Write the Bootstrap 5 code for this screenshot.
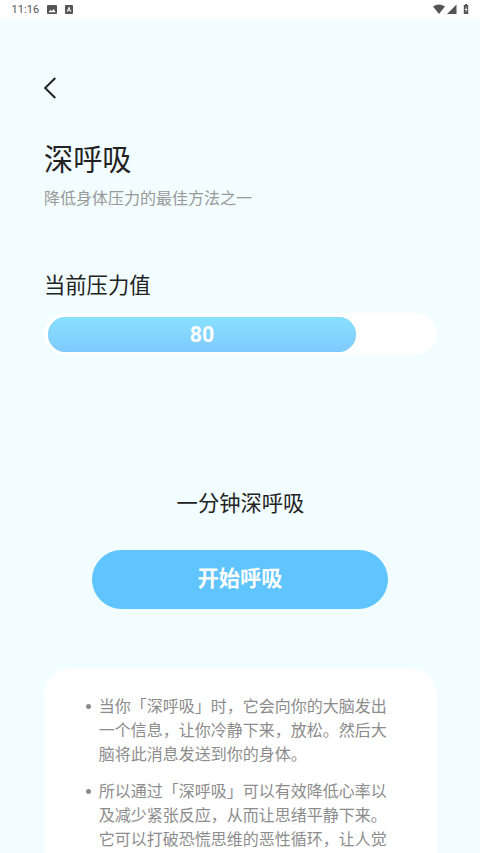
<!DOCTYPE html>
<html lang="zh-CN">
<head>
<meta charset="utf-8">
<meta name="viewport" content="width=device-width, initial-scale=1">
<title>深呼吸</title>
<link href="https://cdn.jsdelivr.net/npm/bootstrap@5.3.0/dist/css/bootstrap.min.css" rel="stylesheet">
<style>
html,body{height:853px;overflow:hidden}
body{background:#f1fdff;color:#222;font-family:Roboto,"Noto Sans CJK SC",sans-serif}
.status-strip{height:19px;padding:0 11.5px;background:#fff;color:#555;font-size:11px;line-height:19px;letter-spacing:.1px}
.screen{height:834px;padding:57px 43px 0 44px}
.back-link{width:14px;height:24px;line-height:0}
.page-title{font-size:29.2px;line-height:40px;margin-top:40px;font-weight:400}
.sub{font-size:16px;line-height:24px;margin-top:7px;color:#999}
.section-title{font-size:21.3px;line-height:30px;font-weight:400}
.stress{margin-top:60px}
.stress-track{height:42px;padding:4px;background:#fff;border-radius:21px;margin-top:12px}
.stress-fill{height:34.5px;padding-top:1px;border-radius:18px;background:linear-gradient(#88e1ff,#80c9ff);box-shadow:inset 0 0 1px #63c4f8;font-size:21.3px;font-weight:700}
.session{margin-top:134px}
.start-btn,.start-btn:hover{width:296px;height:58.5px;background:#60c4ff;color:#fff;font-size:21.3px;font-weight:700;margin-top:31px;margin-right:1px;border:0;padding:0}
.tips{margin-top:59px;background:#fff;border-radius:27px 27px 0 0;padding:27px 48px 0 42px}
.tips li{position:relative;padding-left:12.8px;font-size:16px;line-height:24px;color:#8c8c8c;white-space:nowrap}
.tips li+li{margin-top:13px}
.tips li::before{content:"";position:absolute;left:0;top:9px;width:5px;height:5px;border-radius:50%;background:#8c8c8c}
</style>
<script src="https://cdn.jsdelivr.net/npm/bootstrap@5.3.0/dist/js/bootstrap.bundle.min.js"></script>
</head>
<body>
<header class="status-strip d-flex align-items-center justify-content-between">
  <div class="d-flex align-items-center">
    <span>11:16</span>
    <svg class="ms-2" width="10" height="9" viewBox="0 0 10 9"><rect width="10" height="9" rx="1" fill="#555"/><path d="M1.5 7.2 3.4 4.7 4.8 6.2 6.6 4 8.7 7.2Z" fill="#fff"/></svg>
    <svg class="ms-2" width="8" height="9" viewBox="0 0 8 9"><rect width="8" height="9" rx="1" fill="#555"/><path d="M2.2 6.8 4 2.3 5.8 6.8M2.9 5.3H5.1" fill="none" stroke="#fff"/></svg>
  </div>
  <svg width="36" height="11" viewBox="0 0 36 11"><g fill="#555"><path d="M0 2.6Q6-1.8 12 2.6L6 10Z"/><path d="M23.5.5V10H14Z"/><path d="M30.8 1H32V0H34V1H35.2V10H30.8Z"/></g><path d="M33.7 2.5 31.7 6H33L32.6 8.6 34.5 5.1H33.3Z" fill="#fff"/></svg>
</header>
<main class="screen d-flex flex-column">
  <a href="#" class="back-link d-block" aria-label="返回"><svg width="14" height="24" viewBox="0 0 14 24"><path d="M11.3 2 1.2 12 11.3 22" fill="none" stroke="#222" stroke-width="2"/></svg></a>
  <h1 class="page-title mb-0">深呼吸</h1>
  <p class="sub mb-0">降低身体压力的最佳方法之一</p>
  <section class="stress">
    <h2 class="section-title mb-0">当前压力值</h2>
    <div class="stress-track">
      <div class="stress-fill d-flex align-items-center justify-content-center text-white" style="width:80%">80</div>
    </div>
  </section>
  <section class="session d-flex flex-column align-items-center">
    <h2 class="section-title mb-0">一分钟深呼吸</h2>
    <button type="button" class="btn rounded-pill start-btn">开始呼吸</button>
  </section>
  <section class="tips flex-grow-1">
    <ul class="list-unstyled mb-0">
      <li>当你「深呼吸」时，它会向你的大脑发出<br>一个信息，让你冷静下来，放松。然后大<br>脑将此消息发送到你的身体。</li>
      <li>所以通过「深呼吸」可以有效降低心率以<br>及减少紧张反应，从而让思绪平静下来。<br>它可以打破恐慌思维的恶性循环，让人觉</li>
    </ul>
  </section>
</main>
</body>
</html>
